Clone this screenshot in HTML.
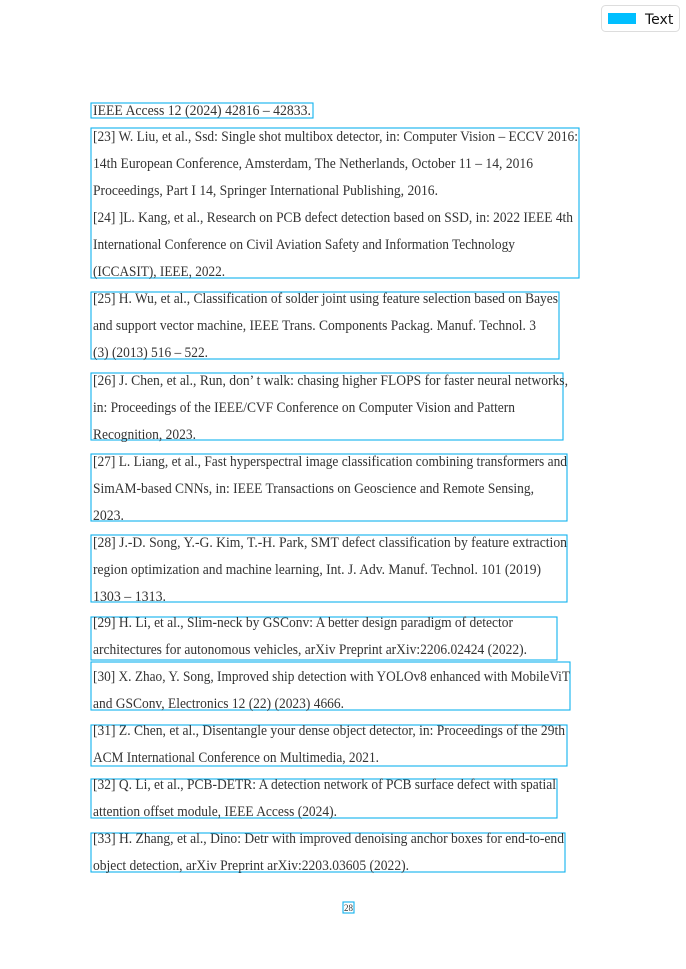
<!DOCTYPE html>
<html><head><meta charset="utf-8"><style>
html,body{margin:0;padding:0;background:#fff;}
svg{display:block}
text{font-family:"Liberation Serif",serif;font-size:15px;fill:#333}
rect.b{fill:none;stroke:#10b2ee;stroke-width:1.1}
</style></head><body>
<svg width="686" height="969" viewBox="0 0 686 969" xmlns="http://www.w3.org/2000/svg">
<rect x="601.5" y="5.5" width="78" height="26" rx="4" fill="#fff" stroke="#ddd"/>
<rect x="608" y="13" width="28" height="11" fill="#00bfff"/>
<text x="645" y="24" style="font-family:'DejaVu Sans',sans-serif;font-size:14px;fill:#111">Text</text>

<rect class="b" x="91" y="103" width="222" height="15"/>
<rect class="b" x="91" y="128" width="488" height="150"/>
<rect class="b" x="91" y="292" width="468" height="67"/>
<rect class="b" x="91" y="373" width="472" height="67"/>
<rect class="b" x="91" y="454" width="476" height="67"/>
<rect class="b" x="91" y="535" width="476" height="67"/>
<rect class="b" x="91" y="617" width="466" height="43"/>
<rect class="b" x="91" y="662" width="479" height="48"/>
<rect class="b" x="91" y="725" width="476" height="41"/>
<rect class="b" x="91" y="779" width="466" height="39"/>
<rect class="b" x="91" y="833" width="474" height="39"/>
<rect class="b" x="343" y="902" width="11" height="11"/>

<text x="93" y="115" textLength="218" lengthAdjust="spacingAndGlyphs">IEEE Access 12 (2024) 42816 – 42833.</text>
<text x="93" y="141" textLength="485" lengthAdjust="spacingAndGlyphs">[23] W. Liu, et al., Ssd: Single shot multibox detector, in: Computer Vision – ECCV 2016:</text>
<text x="93" y="168" textLength="440" lengthAdjust="spacingAndGlyphs">14th European Conference, Amsterdam, The Netherlands, October 11 – 14, 2016</text>
<text x="93" y="195" textLength="345" lengthAdjust="spacingAndGlyphs">Proceedings, Part I 14, Springer International Publishing, 2016.</text>
<text x="93" y="222" textLength="480" lengthAdjust="spacingAndGlyphs">[24] ]L. Kang, et al., Research on PCB defect detection based on SSD, in: 2022 IEEE 4th</text>
<text x="93" y="249" textLength="422" lengthAdjust="spacingAndGlyphs">International Conference on Civil Aviation Safety and Information Technology</text>
<text x="93" y="276" textLength="132" lengthAdjust="spacingAndGlyphs">(ICCASIT), IEEE, 2022.</text>
<text x="93" y="303" textLength="465" lengthAdjust="spacingAndGlyphs">[25] H. Wu, et al., Classification of solder joint using feature selection based on Bayes</text>
<text x="93" y="330" textLength="443" lengthAdjust="spacingAndGlyphs">and support vector machine, IEEE Trans. Components Packag. Manuf. Technol. 3</text>
<text x="93" y="357" textLength="115" lengthAdjust="spacingAndGlyphs">(3) (2013) 516 – 522.</text>
<text x="93" y="385" textLength="475" lengthAdjust="spacingAndGlyphs">[26] J. Chen, et al., Run, don’ t walk: chasing higher FLOPS for faster neural networks,</text>
<text x="93" y="412" textLength="422" lengthAdjust="spacingAndGlyphs">in: Proceedings of the IEEE/CVF Conference on Computer Vision and Pattern</text>
<text x="93" y="439" textLength="103" lengthAdjust="spacingAndGlyphs">Recognition, 2023.</text>
<text x="93" y="466" textLength="474" lengthAdjust="spacingAndGlyphs">[27] L. Liang, et al., Fast hyperspectral image classification combining transformers and</text>
<text x="93" y="493" textLength="441" lengthAdjust="spacingAndGlyphs">SimAM-based CNNs, in: IEEE Transactions on Geoscience and Remote Sensing,</text>
<text x="93" y="520" textLength="31" lengthAdjust="spacingAndGlyphs">2023.</text>
<text x="93" y="547" textLength="474" lengthAdjust="spacingAndGlyphs">[28] J.-D. Song, Y.-G. Kim, T.-H. Park, SMT defect classification by feature extraction</text>
<text x="93" y="574" textLength="448" lengthAdjust="spacingAndGlyphs">region optimization and machine learning, Int. J. Adv. Manuf. Technol. 101 (2019)</text>
<text x="93" y="601" textLength="73" lengthAdjust="spacingAndGlyphs">1303 – 1313.</text>
<text x="93" y="627" textLength="420" lengthAdjust="spacingAndGlyphs">[29] H. Li, et al., Slim-neck by GSConv: A better design paradigm of detector</text>
<text x="93" y="654" textLength="434" lengthAdjust="spacingAndGlyphs">architectures for autonomous vehicles, arXiv Preprint arXiv:2206.02424 (2022).</text>
<text x="93" y="681" textLength="477" lengthAdjust="spacingAndGlyphs">[30] X. Zhao, Y. Song, Improved ship detection with YOLOv8 enhanced with MobileViT</text>
<text x="93" y="708" textLength="251" lengthAdjust="spacingAndGlyphs">and GSConv, Electronics 12 (22) (2023) 4666.</text>
<text x="93" y="735" textLength="472" lengthAdjust="spacingAndGlyphs">[31] Z. Chen, et al., Disentangle your dense object detector, in: Proceedings of the 29th</text>
<text x="93" y="762" textLength="286" lengthAdjust="spacingAndGlyphs">ACM International Conference on Multimedia, 2021.</text>
<text x="93" y="789" textLength="463" lengthAdjust="spacingAndGlyphs">[32] Q. Li, et al., PCB-DETR: A detection network of PCB surface defect with spatial</text>
<text x="93" y="816" textLength="244" lengthAdjust="spacingAndGlyphs">attention offset module, IEEE Access (2024).</text>
<text x="93" y="843" textLength="471" lengthAdjust="spacingAndGlyphs">[33] H. Zhang, et al., Dino: Detr with improved denoising anchor boxes for end-to-end</text>
<text x="93" y="870" textLength="316" lengthAdjust="spacingAndGlyphs">object detection, arXiv Preprint arXiv:2203.03605 (2022).</text>
<text x="344" y="911" style="font-size:9px" textLength="9" lengthAdjust="spacingAndGlyphs">28</text>
</svg>
</body></html>
